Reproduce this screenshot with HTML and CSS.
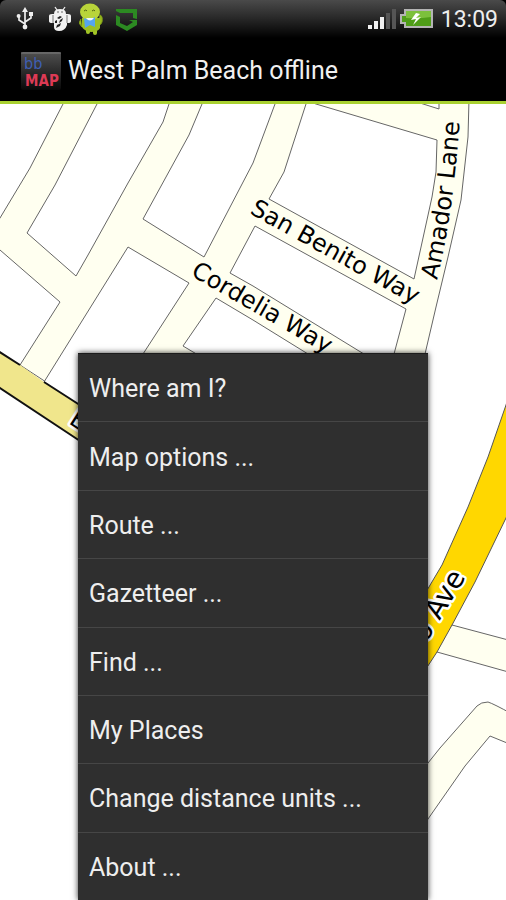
FILE: index.html
```html
<!DOCTYPE html>
<html lang="en">
<head>
  <meta charset="utf-8">
  <meta name="viewport" content="width=device-width, initial-scale=1">
  <title>West Palm Beach offline</title>
  <link rel="stylesheet" href="styles.css">
</head>
<body>
  <div class="status-wrap">
    <div class="status-bar">
      <!-- usb -->
      <svg class="usb" width="18" height="24" viewBox="0 0 18 24">
        <path d="M9 4V20M9 17L3 13V10M9 15L15 11V8" fill="none" stroke="#eee" stroke-width="1.7"/>
        <path d="M9 0L12 5H6Z" fill="#eee"/>
        <circle cx="9" cy="20" r="2.4" fill="#eee"/>
        <circle cx="2.6" cy="9" r="2" fill="#eee"/>
        <rect x="13" y="5" width="4" height="4" fill="#eee"/>
      </svg>
      <!-- usb debugging -->
      <svg class="debug" width="24" height="26" viewBox="0 0 24 26">
        <path d="M7 1L9 4M17 1L15 4" stroke="#eee" stroke-width="1.3"/>
        <path d="M6 8Q6 3 12 3Q18 3 18 8Z" fill="#f2f2f2"/>
        <path d="M1 10Q1 8 4 8H20Q23 8 23 10V15Q23 17 20 17H19V19Q17 25 11 25Q6 25 6 21V17H4Q1 17 1 15Z" fill="#f2f2f2"/>
        <path d="M5 9V17M19 9V17" stroke="#777"/>
        <path d="M9 12L12 10L14 11L11 13ZM12 14L15 12L14 15L11 17ZM9 19L13 17L12 20L8 22ZM7 15L9 14V17H7Z" fill="#222"/>
        <circle cx="10" cy="6" r="0.8" fill="#555"/><circle cx="14" cy="6" r="0.8" fill="#555"/>
      </svg>
      <!-- android figure -->
      <svg class="droid" width="24" height="32" viewBox="0 0 24 32">
        <path d="M2 16L0 20L3 24M21 12Q24 13 23 19Q22 22 20 22Z" fill="#9bbd20" stroke="#82a017"/>
        <rect x="7" y="25" width="4" height="6" rx="2" fill="#a3c626"/>
        <rect x="14" y="26" width="4" height="6" rx="2" fill="#a3c626"/>
        <path d="M3 15H21V25Q19 29 12 29Q5 28 3 24Z" fill="#9cbf22"/>
        <ellipse cx="11" cy="9" rx="10" ry="8.5" fill="#b9d43a"/>
        <path d="M5 8Q7 6 8 8M13 8Q15 6 16 8" fill="none" stroke="#536710"/>
        <path d="M5 15L10 17L16 14L16 24L11 22L6 25Z" fill="#55a5ef"/>
        <path d="M7 15Q11 20 15 15Z" fill="#eef6ff"/>
      </svg>
      <!-- sync -->
      <svg class="sync" width="22" height="24" viewBox="0 0 22 24">
        <path d="M0 2H21V12L17 11V6H4L0 4Z" fill="#2c8a22"/>
        <path d="M0 8L4 10V16L11 19L17 15L13 13H21V18L11 24L0 18Z" fill="#2c8a22"/>
      </svg>
      <svg class="signal" width="28" height="22" viewBox="0 0 28 22">
        <g fill="#f0f0f0">
          <rect y="17" width="4" height="4"/><rect x="6" y="13" width="4" height="8"/><rect x="12" y="9" width="4" height="12"/>
        </g>
        <g fill="#555">
          <rect x="18" y="5" width="4" height="16"/><rect x="24" y="1" width="4" height="20"/>
        </g>
      </svg>
      <svg class="battery" width="33" height="20" viewBox="0 0 33 20">
        <path d="M5 1H32V18H5V14H1V6H5Z" fill="#4f9d18" stroke="#b4b4b4" stroke-width="2"/>
        <path d="M6 2H31V8Q18 10 6 9Z" fill="#7cc03c"/>
        <path d="M16 4L11 11L16 10L13 16L21 8L16 9L20 5Z" fill="#fff"/>
      </svg>
      <time class="clock">13:09</time>
    </div>
  </div>

  <header class="title-bar">
    <svg class="logo" width="42" height="40" viewBox="0 0 42 40">
      <defs>
        <linearGradient id="tile" x1="0" y1="0" x2="0" y2="1">
          <stop offset="0" stop-color="#505050"/>
          <stop offset="1" stop-color="#080808"/>
        </linearGradient>
      </defs>
      <rect x="1" y="1" width="40" height="38" rx="2" fill="url(#tile)"/>
      <path d="M1 2H41" stroke="#808080"/>
      <text class="logo-top" x="4" y="18">bb</text>
      <text class="logo-map" x="5" y="35">MAP</text>
    </svg>
    <h1>West Palm Beach offline</h1>
  </header>

  <main class="map">
    <svg class="streets" viewBox="0 104 506 796" preserveAspectRatio="xMinYMin slice" role="img" aria-label="Street map">
      <defs>
        <path id="amador" d="M437 280Q455 207 461 100"/>
      </defs>
      <!-- residential streets, with the blocks between them on top -->
      <path class="road" d="M-5 100H469L468 137L461 200L448 257L436 307L425 354L400 450H150L20 365L60 302L0 250L-5 246Z"/>
      <g class="block">
        <path d="M-5 95H67L63 104L30 168L0 218L-5 225Z"/>
        <path d="M101 95L97 104L55 185L27 233L76 276L88 255L128 183L163 122L169 104L172 95Z"/>
        <path d="M205 95L202 104L189 135L143 219L204 257L253 163L275 104L278 95Z"/>
        <path d="M309 95L306 104L284 172L269 199L414 279L432 197L436 172L437 140L316 104L290 95Z"/>
        <path d="M400 95L420 103L439 109V95Z"/>
        <path d="M230 273L255 226L406 309L394 354L390 370L253 286Z"/>
        <path d="M216 298L183 346L230 374H340L308 354L253 320Z"/>
        <path d="M44 382L128 247L189 283L143 354L100 420Z"/>
      </g>

      <path class="khaki" d="M-5 349L20 365L44 382L100 418V454L77 439L0 388L-5 385Z"/>
      <path class="khaki-edge" d="M-5 349L20 365M44 382L100 418M-5 385L0 388L77 439L100 454"/>

      <path class="road" d="M420 646L452 625L512 641V673L437 652Z"/>
      <path class="road" d="M420 773L428 763L440 748L477 706Q481 702 488 702Q494 704 512 714V745L490 736L465 766L428 819L420 831Z"/>
      <path class="gold" d="M512 385L506 405L488 457L468 507L442 565L420 602V678L437 652L452 625L475 582L506 518L512 505Z"/>

      <text class="street" transform="translate(249 213) rotate(29)">San Benito Way</text>
      <text class="street" transform="translate(190 275) rotate(30)">Cordelia Way</text>
      <text class="street"><textPath href="#amador">Amador Lane</textPath></text>
      <text class="street halo" transform="translate(68 423) rotate(33)">E</text>
      <text class="street halo avenue" text-anchor="end" transform="translate(466 577) rotate(-59)">o Ave</text>
    </svg>

    <nav class="menu">
      <button type="button">Where am I?</button>
      <button type="button">Map options ...</button>
      <button type="button">Route ...</button>
      <button type="button">Gazetteer ...</button>
      <button type="button">Find ...</button>
      <button type="button">My Places</button>
      <button type="button">Change distance units ...</button>
      <button type="button">About ...</button>
    </nav>
  </main>
</body>
</html>
```
FILE: styles.css
```css
* {
  box-sizing: border-box;
}

body {
  margin: 0;
  min-height: 100vh;
  display: flex;
  flex-direction: column;
  background: #fff;
  font-family: Roboto, sans-serif;
}

.status-wrap {
  background: #000;
}

.status-bar {
  display: flex;
  align-items: center;
  height: 38px;
  padding: 0 8px 0 16px;
  border-radius: 6px 6px 0 0;
  background: linear-gradient(#4a4a4a, #2a2a2a 45%, #000);
}

.status-bar svg {
  flex: none;
}

.debug {
  margin-left: 14px;
}

.droid {
  margin-left: 7px;
}

.sync {
  margin-left: 13px;
}

.signal {
  margin-left: auto;
}

.battery {
  margin-left: 4px;
}

.clock {
  margin-left: 8px;
  color: #eee;
  font-size: 23px;
}

.title-bar {
  display: flex;
  align-items: center;
  gap: 6px;
  height: 66px;
  padding: 2px 20px 0;
  background: #000;
  border-bottom: 3px solid #a9d131;
}

.title-bar h1 {
  margin: 0;
  color: #f0f0f0;
  font-size: 25px;
  font-weight: 400;
}

.logo-top {
  fill: #3f5fb5;
  font: 16px "DejaVu Sans Condensed", "DejaVu Sans", sans-serif;
}

.logo-map {
  fill: #dd3a55;
  font: bold 15px "DejaVu Sans Condensed", "DejaVu Sans", sans-serif;
}

.map {
  position: relative;
  flex: 1;
  display: flex;
  min-height: 640px;
  overflow: hidden;
}

.streets {
  position: absolute;
  width: 100%;
  height: 100%;
}

.road {
  fill: #fffff0;
  stroke: #666;
}

.block {
  fill: #fff;
  stroke: #666;
}

.khaki {
  fill: #f0e68c;
}

.khaki-edge {
  fill: none;
  stroke: #111;
  stroke-width: 2;
}

.gold {
  fill: #ffd700;
  stroke: #555;
}

.street {
  fill: #000;
  font: 24px "DejaVu Sans", sans-serif;
}

.halo {
  stroke: #fff;
  stroke-width: 5;
  stroke-linejoin: round;
  paint-order: stroke;
}

.avenue {
  font-size: 28px;
}

/* options menu, over the map */
.menu {
  position: absolute;
  top: 249px;
  right: 78px;
  bottom: 0;
  left: 78px;
  display: flex;
  flex-direction: column;
  background: #2f2f2f;
  border-top: 1px solid #1c1c1c;
  box-shadow: 0 0 6px rgba(0, 0, 0, 0.8);
}

.menu button {
  flex: 1;
  padding: 2px 11px 0;
  border: 0;
  border-bottom: 1px solid #464646;
  background: none;
  color: #eee;
  font: 25px Roboto, sans-serif;
  text-align: left;
  cursor: pointer;
}

.menu button:last-child {
  border-bottom: 0;
}
```
